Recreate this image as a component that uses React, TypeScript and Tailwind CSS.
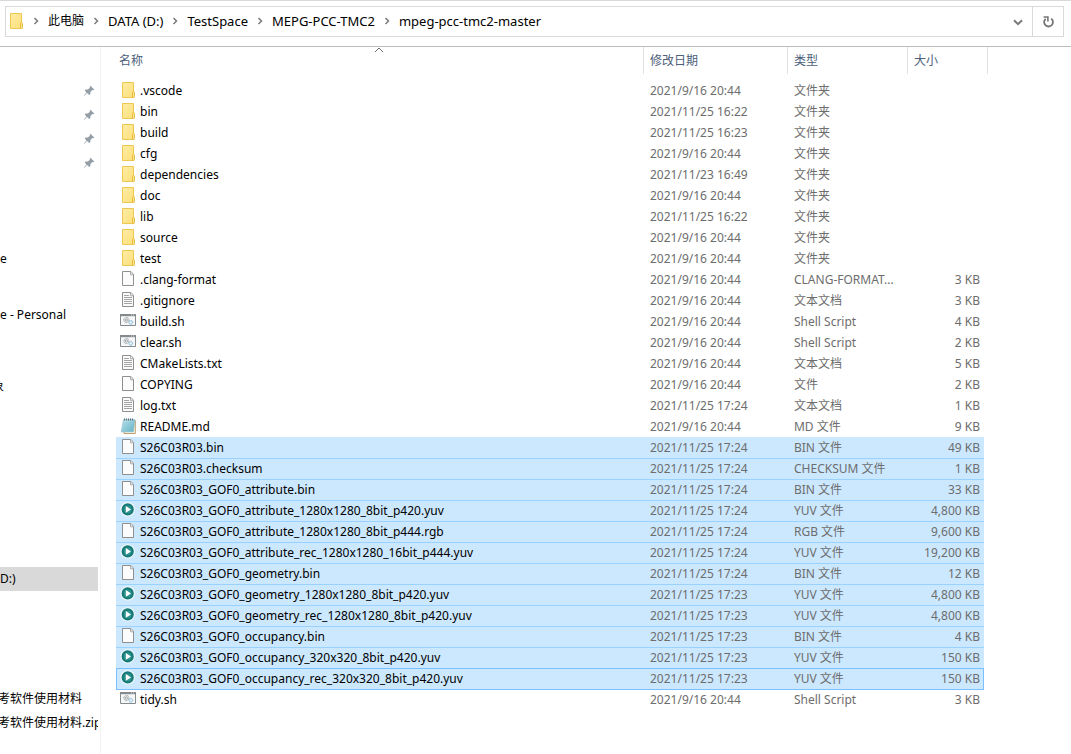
import React, { useState } from 'react';

type FileKind = 'folder' | 'blank' | 'text' | 'script' | 'notepad' | 'video';

interface FileEntry {
  name: string;
  date: string;
  type: string;
  size?: string;
  kind: FileKind;
}

const OLD = '2021/9/16 20:44';

const files: FileEntry[] = [
  { name: '.vscode', date: OLD, type: '文件夹', kind: 'folder' },
  { name: 'bin', date: '2021/11/25 16:22', type: '文件夹', kind: 'folder' },
  { name: 'build', date: '2021/11/25 16:23', type: '文件夹', kind: 'folder' },
  { name: 'cfg', date: OLD, type: '文件夹', kind: 'folder' },
  { name: 'dependencies', date: '2021/11/23 16:49', type: '文件夹', kind: 'folder' },
  { name: 'doc', date: OLD, type: '文件夹', kind: 'folder' },
  { name: 'lib', date: '2021/11/25 16:22', type: '文件夹', kind: 'folder' },
  { name: 'source', date: OLD, type: '文件夹', kind: 'folder' },
  { name: 'test', date: OLD, type: '文件夹', kind: 'folder' },
  { name: '.clang-format', date: OLD, type: 'CLANG-FORMAT...', size: '3 KB', kind: 'blank' },
  { name: '.gitignore', date: OLD, type: '文本文档', size: '3 KB', kind: 'text' },
  { name: 'build.sh', date: OLD, type: 'Shell Script', size: '4 KB', kind: 'script' },
  { name: 'clear.sh', date: OLD, type: 'Shell Script', size: '2 KB', kind: 'script' },
  { name: 'CMakeLists.txt', date: OLD, type: '文本文档', size: '5 KB', kind: 'text' },
  { name: 'COPYING', date: OLD, type: '文件', size: '2 KB', kind: 'blank' },
  { name: 'log.txt', date: '2021/11/25 17:24', type: '文本文档', size: '1 KB', kind: 'text' },
  { name: 'README.md', date: OLD, type: 'MD 文件', size: '9 KB', kind: 'notepad' },
  { name: 'S26C03R03.bin', date: '2021/11/25 17:24', type: 'BIN 文件', size: '49 KB', kind: 'blank' },
  { name: 'S26C03R03.checksum', date: '2021/11/25 17:24', type: 'CHECKSUM 文件', size: '1 KB', kind: 'blank' },
  { name: 'S26C03R03_GOF0_attribute.bin', date: '2021/11/25 17:24', type: 'BIN 文件', size: '33 KB', kind: 'blank' },
  { name: 'S26C03R03_GOF0_attribute_1280x1280_8bit_p420.yuv', date: '2021/11/25 17:24', type: 'YUV 文件', size: '4,800 KB', kind: 'video' },
  { name: 'S26C03R03_GOF0_attribute_1280x1280_8bit_p444.rgb', date: '2021/11/25 17:24', type: 'RGB 文件', size: '9,600 KB', kind: 'blank' },
  { name: 'S26C03R03_GOF0_attribute_rec_1280x1280_16bit_p444.yuv', date: '2021/11/25 17:24', type: 'YUV 文件', size: '19,200 KB', kind: 'video' },
  { name: 'S26C03R03_GOF0_geometry.bin', date: '2021/11/25 17:24', type: 'BIN 文件', size: '12 KB', kind: 'blank' },
  { name: 'S26C03R03_GOF0_geometry_1280x1280_8bit_p420.yuv', date: '2021/11/25 17:23', type: 'YUV 文件', size: '4,800 KB', kind: 'video' },
  { name: 'S26C03R03_GOF0_geometry_rec_1280x1280_8bit_p420.yuv', date: '2021/11/25 17:23', type: 'YUV 文件', size: '4,800 KB', kind: 'video' },
  { name: 'S26C03R03_GOF0_occupancy.bin', date: '2021/11/25 17:23', type: 'BIN 文件', size: '4 KB', kind: 'blank' },
  { name: 'S26C03R03_GOF0_occupancy_320x320_8bit_p420.yuv', date: '2021/11/25 17:23', type: 'YUV 文件', size: '150 KB', kind: 'video' },
  { name: 'S26C03R03_GOF0_occupancy_rec_320x320_8bit_p420.yuv', date: '2021/11/25 17:23', type: 'YUV 文件', size: '150 KB', kind: 'video' },
  { name: 'tidy.sh', date: OLD, type: 'Shell Script', size: '3 KB', kind: 'script' },
];

const FIRST_SELECTED = 17;
const LAST_SELECTED = 28;

const rootCrumb = '此电脑';
const crumbs = [rootCrumb, 'DATA (D:)', 'TestSpace', 'MEPG-PCC-TMC2', 'mpeg-pcc-tmc2-master'];

interface NavItem {
  label?: string;
  pinned?: boolean;
  active?: boolean;
  className?: string;
}

const blankRows = (count: number): NavItem[] => Array.from({ length: count }, () => ({}));

// The pane is scrolled sideways, so most labels only show their tail
const navGroups: NavItem[][] = [
  [{ pinned: true }, { pinned: true }, { pinned: true }, { pinned: true }, ...blankRows(3), { label: 'e' }, {}],
  [
    { label: 'e - Personal' },
    ...blankRows(2),
    { label: '象', className: '-ml-2' },
    ...blankRows(7),
    { label: 'D:)', active: true },
    ...blankRows(4),
    { label: '考软件使用材料', className: '-ml-0.5' },
    { label: '考软件使用材料.zip', className: '-ml-0.5' },
  ],
];

const FolderIcon = () => (
  <svg className="w-4 h-4 shrink-0" viewBox="0 0 16 16" aria-hidden="true">
    <defs>
      <linearGradient id="folder" x1="0" y1="0" x2="1" y2="1">
        <stop offset="0" stopColor="#ffeda6" />
        <stop offset="1" stopColor="#fddf7a" />
      </linearGradient>
    </defs>
    <path d="M2.5.5h11v15h-11z" fill="url(#folder)" stroke="#ecc853" />
    <path d="M12.5 15.5V10.5q0-.9.9-.9h.3q.8 0 .8.9v4.1q0 .9-.9.9z" fill="#ffe48c" stroke="#e3b93a" strokeWidth=".9" />
  </svg>
);

const PageIcon = ({ lined }: { lined?: boolean }) => (
  <svg className="w-4 h-4 shrink-0" viewBox="0 0 16 16" aria-hidden="true">
    <path d="M2.5.5h8.4l2.6 2.8v11.2h-11z" fill="#fbfbfb" stroke="#8f8f8f" />
    <path d="M10.5.8v3h2.8" fill="#e9e9e9" stroke="#a5a5a5" strokeWidth=".9" />
    {lined && <path d="M4 3.5h5M4 5.5h8M4 7.5h8M4 9.5h8M4 11.5h8" stroke="#9a9a9a" strokeWidth=".9" />}
  </svg>
);

const ScriptIcon = () => (
  <svg className="w-4 h-4 shrink-0" viewBox="0 0 16 16" aria-hidden="true">
    <path d="M.5 1.5h15v11H.5z" fill="#f7f7f7" stroke="#858a8e" />
    <path d="M0 1h16v2.2H0z" fill="#858a8e" />
    <path d="M11 2h1M13 2h1" stroke="#e8e8e8" strokeWidth=".9" />
    <circle cx="6.4" cy="7" r="2.6" fill="#e6e9eb" stroke="#9a9fa3" strokeDasharray="1 .6" />
    <circle cx="6.4" cy="7" r="1.1" fill="#fff" stroke="#84898d" strokeWidth=".7" />
    <circle cx="10.8" cy="9.3" r="1.9" fill="#c8e5f5" stroke="#86b4ce" strokeDasharray=".9 .5" />
    <circle cx="10.8" cy="9.3" r=".7" fill="#fff" />
  </svg>
);

const NotepadIcon = () => (
  <svg className="w-4 h-4 shrink-0" viewBox="0 0 16 16" aria-hidden="true">
    <defs>
      <linearGradient id="pad" x1="0" y1="0" x2="1" y2="1">
        <stop offset="0" stopColor="#c9e9f1" />
        <stop offset="1" stopColor="#5fb0c6" />
      </linearGradient>
    </defs>
    <path d="M4 2.5h11.3v13H4z" fill="#f8f3e3" stroke="#b29461" strokeWidth=".9" />
    <path d="M3.5 1.6h11.3l-1.5 12.2H1.3z" fill="url(#pad)" stroke="#79b5c5" strokeWidth=".6" />
    <path d="M4 5h9.6M3.7 7h9.6M3.4 9h9.6M3.1 11h9.6" stroke="#82c2d2" strokeWidth=".6" />
    <path d="M4.5.4v2.2M6.5.4v2.2M8.5.4v2.2M10.5.4v2.2M12.5.4v2.2" stroke="#5b6b70" strokeWidth=".9" />
  </svg>
);

const VideoIcon = () => (
  <svg className="w-4 h-4 shrink-0" viewBox="0 0 16 16" aria-hidden="true">
    <circle cx="7.7" cy="7.4" r="7.2" fill="#f3f8f9" />
    <circle cx="7.7" cy="7.4" r="6.1" fill="#157a78" />
    <circle cx="7.7" cy="7.4" r="3.9" fill="#2f938e" />
    <path d="M5.8 4v6.8l5.2-3.4z" fill="#fff" />
  </svg>
);

const PinIcon = () => (
  <svg className="w-3 h-3 shrink-0" viewBox="0 0 12 12" aria-hidden="true">
    <path
      d="M7.4.8 11.2 4.6 10.2 5.2 9.5 4.9 7.4 7 7.3 9.2 6.3 10.1 4.2 8 1 11 .8 10.8 3.6 7.4 1.7 5.5 2.6 4.5 5 4.5 7 2.5 6.6 1.7z"
      fill="#929da6"
    />
  </svg>
);

const CrumbChevron = () => (
  <svg className="w-2 h-3 shrink-0" viewBox="0 0 8 12" fill="none" aria-hidden="true">
    <path d="M2.5 3l3 3-3 3" stroke="#7a7a7a" strokeWidth="1.5" />
  </svg>
);

const FileIcon = ({ kind }: { kind: FileKind }) => {
  switch (kind) {
    case 'folder':
      return <FolderIcon />;
    case 'text':
      return <PageIcon lined />;
    case 'script':
      return <ScriptIcon />;
    case 'notepad':
      return <NotepadIcon />;
    case 'video':
      return <VideoIcon />;
    default:
      return <PageIcon />;
  }
};

const AddressBar = () => (
  <div className="border-t border-[#d9d9d9] border-b border-b-[#bcbcbc] pt-[5px] pb-[9px] pl-[5px] pr-[7px]">
    <div className="flex h-[31px] border border-[#d9d9d9]">
      <nav aria-label="地址" className="flex flex-1 items-center pl-0.5 pb-px">
        <FolderIcon />
        {crumbs.map((crumb) => (
          <React.Fragment key={crumb}>
            <span className="mx-2">
              <CrumbChevron />
            </span>
            <button
              type="button"
              className={`whitespace-nowrap text-black ${crumb === rootCrumb ? 'text-[12px]' : 'text-[13px]'}`}
            >
              {crumb}
            </button>
          </React.Fragment>
        ))}
      </nav>
      <button type="button" aria-label="以前的位置" className="flex w-7 items-center justify-center">
        <svg className="w-3 h-3" viewBox="0 0 12 12" fill="none">
          <path d="M2 4.2l4 4 4-4" stroke="#7a7a7a" strokeWidth="2" />
        </svg>
      </button>
      <button type="button" aria-label="刷新" className="flex w-[31px] items-center justify-center border-l border-[#d9d9d9]">
        <svg className="w-3 h-3" viewBox="0 0 12 12" fill="none">
          <path d="M9.2 2.6A4.4 4.4 0 1 1 3.6 2.8" stroke="#757575" strokeWidth="1.8" />
          <path d="M1.6 1h4.3v4.4" stroke="#757575" strokeWidth="1.6" />
        </svg>
      </button>
    </div>
  </div>
);

const NavPane = () => (
  <aside className="w-[101px] shrink-0 overflow-hidden border-r border-[#f2f2f2] pr-0.5 pt-8">
    {navGroups.map((group, g) => (
      <ul key={g} className="mb-2">
        {group.map((item, i) => (
          <li
            key={i}
            className={`flex h-6 items-center overflow-hidden whitespace-nowrap ${item.pinned ? 'justify-end pr-[3px]' : ''} ${item.active ? 'bg-[#d9d9d9]' : ''}`}
          >
            {item.pinned && <PinIcon />}
            {item.label && <span className={item.className}>{item.label}</span>}
          </li>
        ))}
      </ul>
    ))}
  </aside>
);

const HeaderCell = ({ label, sorted, first }: { label: string; sorted?: boolean; first?: boolean }) => (
  <button
    type="button"
    className={`relative flex h-[27px] w-full items-center border-r border-[#e2e2e2] text-left text-[#4c607a] ${first ? 'pl-[3px]' : 'pl-1.5'}`}
  >
    {label}
    {sorted && (
      <svg className="absolute left-1/2 top-0 w-2.5 h-1.5 -translate-x-1/2" viewBox="0 0 10 6" fill="none" aria-hidden="true">
        <path d="M1 5l4-4 4 4" stroke="#6d6d6d" />
      </svg>
    )}
  </button>
);

const App = () => {
  const [selection, setSelection] = useState({ from: FIRST_SELECTED, to: LAST_SELECTED });

  // Row lines are shadows so that they take no room in the cells
  const getCellClass = (index: number) => {
    const { from, to } = selection;
    if (index < from || index > to) return '';
    if (index === to) return 'bg-[#cce8ff] border-[#7abfff] shadow-[inset_0_1px_0_#7abfff,0_1px_0_#7abfff]';
    if (index === from) return 'bg-[#cce8ff]';
    return 'bg-[#cce8ff] shadow-[inset_0_1px_0_#99d1ff]';
  };

  return (
    <div className="flex min-h-screen flex-col bg-white font-['Noto_Sans','Noto_Sans_CJK_SC',sans-serif] text-[12px] leading-4 text-black">
      <AddressBar />
      <div className="flex flex-1">
        <NavPane />
        <main className="min-w-0 flex-1 pl-[15px] pr-[83px]">
          <table className="w-full table-fixed border-separate border-spacing-0" aria-label="mpeg-pcc-tmc2-master">
            <colgroup>
              <col />
              <col className="w-36" />
              <col className="w-[120px]" />
              <col className="w-[76px]" />
              <col className="w-1" />
            </colgroup>
            <thead>
              <tr className="h-[33px] align-top font-normal">
                <th className="p-0 font-normal"><HeaderCell label="名称" sorted first /></th>
                <th className="p-0 font-normal"><HeaderCell label="修改日期" /></th>
                <th className="p-0 font-normal"><HeaderCell label="类型" /></th>
                <th className="p-0 font-normal" colSpan={2}><HeaderCell label="大小" /></th>
              </tr>
            </thead>
            <tbody className="text-[#6d6d6d]">
              {files.map((file, i) => {
                const cell = getCellClass(i);
                const focused = i === selection.to;
                return (
                  <tr
                    key={file.name}
                    aria-selected={cell !== ''}
                    onClick={() => setSelection({ from: i, to: i })}
                    className="h-[21px] whitespace-nowrap"
                  >
                    <td className={`p-0 ${cell} ${focused ? 'border-l pl-[3px]' : 'pl-1'}`}>
                      <div className="flex h-[17px] items-center gap-1 text-black">
                        <span className="pb-px">
                          <FileIcon kind={file.kind} />
                        </span>
                        <span>{file.name}</span>
                      </div>
                    </td>
                    <td className={`p-0 pl-1.5 ${cell}`}>{file.date}</td>
                    <td className={`p-0 pl-1.5 ${cell}`}>{file.type}</td>
                    <td className={`p-0 text-right ${cell} ${focused ? 'border-r pr-[3px]' : 'pr-1'}`}>{file.size}</td>
                    <td className="p-0"></td>
                  </tr>
                );
              })}
            </tbody>
          </table>
        </main>
      </div>
    </div>
  );
};

export default App;
